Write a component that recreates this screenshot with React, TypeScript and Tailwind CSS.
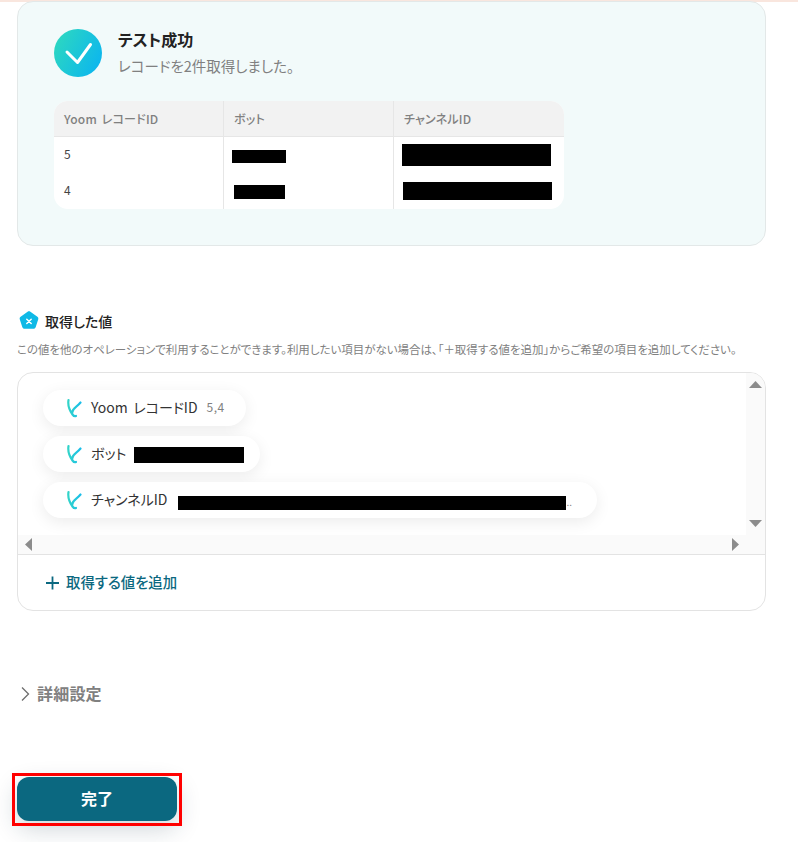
import { useId } from "react";

const rows = [
  { id: "5", bot: "mt-[2px] ml-[-1px] w-[54px] h-[13px]", channel: "mt-0 ml-[-1px] w-[149px] h-[22px]" },
  { id: "4", bot: "mt-[2px] ml-[1px] w-[51px] h-[14px]", channel: "mt-0 w-[149px] h-[18px]" },
];

function CheckBadge() {
  const id = useId();
  return (
    <svg width="48" height="48" viewBox="0 0 48 48" className="shrink-0">
      <defs>
        <linearGradient id={id} x1="0" y1="0.2" x2="1" y2="0.7">
          <stop offset="0" stopColor="#2dd8c0" />
          <stop offset="1" stopColor="#0cb6ee" />
        </linearGradient>
      </defs>
      <circle cx="24" cy="24" r="24" fill={`url(#${id})`} />
      <path d="M13 23l10.500 10.500L36.500 15.500" fill="none" stroke="#fff" strokeWidth="3" strokeLinecap="round" strokeLinejoin="round" />
    </svg>
  );
}

function YoomMark() {
  const id = useId();
  return (
    <svg width="16" height="20" viewBox="0 0 16 20" className="shrink-0">
      <defs>
        <linearGradient id={id} gradientUnits="userSpaceOnUse" x1="1" y1="0" x2="15" y2="0">
          <stop offset="0" stopColor="#35d6c6" />
          <stop offset="1" stopColor="#18bdea" />
        </linearGradient>
      </defs>
      <path
        d="M2.500 2C1.500 8 4 13 6.500 16.500c1 1.400 2.500 2 3.500 1.500M6.300 15C5.500 10.500 10.500 9.500 14.500 4.500"
        fill="none"
        stroke={`url(#${id})`}
        strokeWidth="2.200"
        strokeLinecap="round"
      />
    </svg>
  );
}

function Pill({ label, children, className }: { label: string; children: React.ReactNode; className: string }) {
  return (
    <div className={`flex h-9 items-center rounded-full bg-white pl-[23px] shadow-[0_4px_16px_rgba(0,0,0,0.08)] ${className}`}>
      <YoomMark />
      <span className="ml-[9px] whitespace-nowrap pb-[2px] text-[14px] text-[#333] [word-spacing:2.500px]">{label}</span>
      {children}
    </div>
  );
}

export default function App() {
  return (
    <div className="h-[842px] w-[798px] overflow-hidden bg-white font-['Noto_Sans_CJK_JP','Noto_Sans',sans-serif] [font-feature-settings:'palt']">
      <div className="h-[2px] bg-[#f9e6de]" />

      <div className="relative ml-[17px] mt-[-1px] h-[245px] w-[749px] rounded-[16px] border border-[#e3e8e8] bg-[#f2fafa] pl-[36px] pt-[27px]">
        <div className="flex">
          <CheckBadge />
          <div className="ml-4">
            <div className="-mt-px text-[16px] font-bold leading-[22px] text-[#222]">テスト成功</div>
            <div className="mt-[6px] text-[14.500px] leading-5 text-[#808080]">レコードを2件取得しました。</div>
          </div>
        </div>

        <div className="mt-6 w-[510px] overflow-hidden rounded-[14px] bg-white">
          <div className="grid h-9 grid-cols-[170px_170px_170px] border-b border-[#e6e6e6] bg-[#f2f2f2] text-[12px] font-medium tracking-[0.2px] text-[#808080] [word-spacing:2px]">
            <div className="flex items-center border-r border-[#e6e6e6] pl-[10px]">Yoom レコードID</div>
            <div className="flex items-center border-r border-[#e6e6e6] pl-[10px]">ボット</div>
            <div className="flex items-center pl-[10px]">チャンネルID</div>
          </div>
          {rows.map((row) => (
            <div key={row.id} className="grid h-[36px] grid-cols-[170px_170px_170px] text-[12px] text-[#444]">
              <div className="flex items-center border-r border-[#e6e6e6] pb-[2px] pl-[10px]">{row.id}</div>
              <div className="flex items-center border-r border-[#e6e6e6] pl-[9px]">
                <div className={`bg-black ${row.bot}`} />
              </div>
              <div className="flex items-center pl-[9px]">
                <div className={`bg-black ${row.channel}`} />
              </div>
            </div>
          ))}
        </div>
      </div>

      <div className="ml-[17px] mt-[64px] w-[749px]">
        <div className="flex h-[22px] items-center pl-[2px]">
          <svg width="20" height="20" viewBox="0 0 20 20" className="shrink-0">
            <path d="M10 0.300c.5 0 1 .15 1.400.45l7 5c.8.55 1.100 1.500.85 2.400l-2.600 8.200c-.3.9-1.100 1.500-2.100 1.500H5.450c-1 0-1.800-.6-2.100-1.500L.750 8.150c-.25-.9.05-1.850.85-2.400l7-5c.4-.3.9-.45 1.400-.45z" fill="#0fb9e6" />
            <path d="M7.800 8.300l4.400 4.200M12.200 8.300l-4.400 4.200" stroke="#fff" strokeWidth="1.500" strokeLinecap="round" />
          </svg>
          <span className="ml-[6px] text-[14px] font-medium text-[#222]">取得した値</span>
        </div>
        <div className="mt-[9px] whitespace-nowrap text-[11.470px] leading-[16px] text-[#808080]">
          この値を他のオペレーションで利用することができます。利用したい項目がない場合は、「＋取得する値を追加」からご希望の項目を追加してください。
        </div>

        <div className="mt-[15px] h-[239px] overflow-hidden rounded-[16px] border border-[#e3e3e3]">
          <div className="flex h-[182px] border-b border-[#e3e3e3]">
            <div className="flex min-w-0 flex-1 flex-col">
              <div className="flex h-[162px] flex-col items-start gap-[10px] pl-[25px] pt-[17px]">
                <Pill label="Yoom レコードID" className="w-[203px]">
                  <span className="ml-[9px] pb-[2px] text-[12px] tracking-[0.5px] text-[#808080]">5,4</span>
                </Pill>
                <Pill label="ボット" className="w-[217px]">
                  <div className="ml-2 mt-[2px] h-4 w-[110px] bg-black" />
                </Pill>
                <Pill label="チャンネルID" className="w-[554px]">
                  <div className="ml-[10px] mt-[6px] h-[14px] w-[388px] bg-black" />
                  <span className="ml-[1px] mt-[2px] text-[10px] text-[#808080]">..</span>
                </Pill>
              </div>
              <div className="flex h-[19px] items-center justify-between bg-[#fafafa] px-[7px]">
                <svg width="7" height="13" viewBox="0 0 7 13" className="shrink-0">
                  <path d="M7 0v13L0 6.500z" fill="#8c8c8c" />
                </svg>
                <svg width="7" height="13" viewBox="0 0 7 13" className="shrink-0">
                  <path d="M0 0v13L7 6.500z" fill="#8c8c8c" />
                </svg>
              </div>
            </div>
            <div className="flex w-[19px] flex-col items-center justify-between bg-[#fafafa] pb-[27px] pt-2">
              <svg width="13" height="7" viewBox="0 0 13 7" className="shrink-0">
                <path d="M6.500 0L13 7H0z" fill="#8c8c8c" />
              </svg>
              <svg width="13" height="7" viewBox="0 0 13 7" className="shrink-0">
                <path d="M0 0h13L6.500 7z" fill="#8c8c8c" />
              </svg>
            </div>
          </div>
          <div className="flex h-[55px] items-center pl-[28px] text-[14.400px] font-medium text-[#0b6880]">
            <svg width="14" height="14" viewBox="0 0 14 14" className="shrink-0">
              <path d="M6.500 .5v13M0 7h13" stroke="#0b6880" strokeWidth="1.800" />
            </svg>
            <span className="ml-[6px] pb-[2px]">取得する値を追加</span>
          </div>
        </div>

        <div className="mt-[71px] flex h-6 items-center pl-[3px]">
          <svg width="10" height="14" viewBox="0 0 10 14" className="shrink-0">
            <path d="M2 .5L8.500 7 2 13.500" fill="none" stroke="#6e6e6e" strokeWidth="1.300" />
          </svg>
          <span className="ml-[7px] pb-[2px] text-[16px] font-bold tracking-[0.2px] text-[#808080]">詳細設定</span>
        </div>

        <div className="relative mt-[71px] flex h-11 w-40 items-center justify-center rounded-[12px] bg-[#0b6880] pb-[2px] text-[16px] font-bold text-white shadow-[0_8px_24px_rgba(20,50,70,0.2)]">
          完了
          <div className="absolute -left-[5px] -right-[5px] -top-1 -bottom-[5px] border-[3px] border-[#f00]" />
        </div>
      </div>
    </div>
  );
}
